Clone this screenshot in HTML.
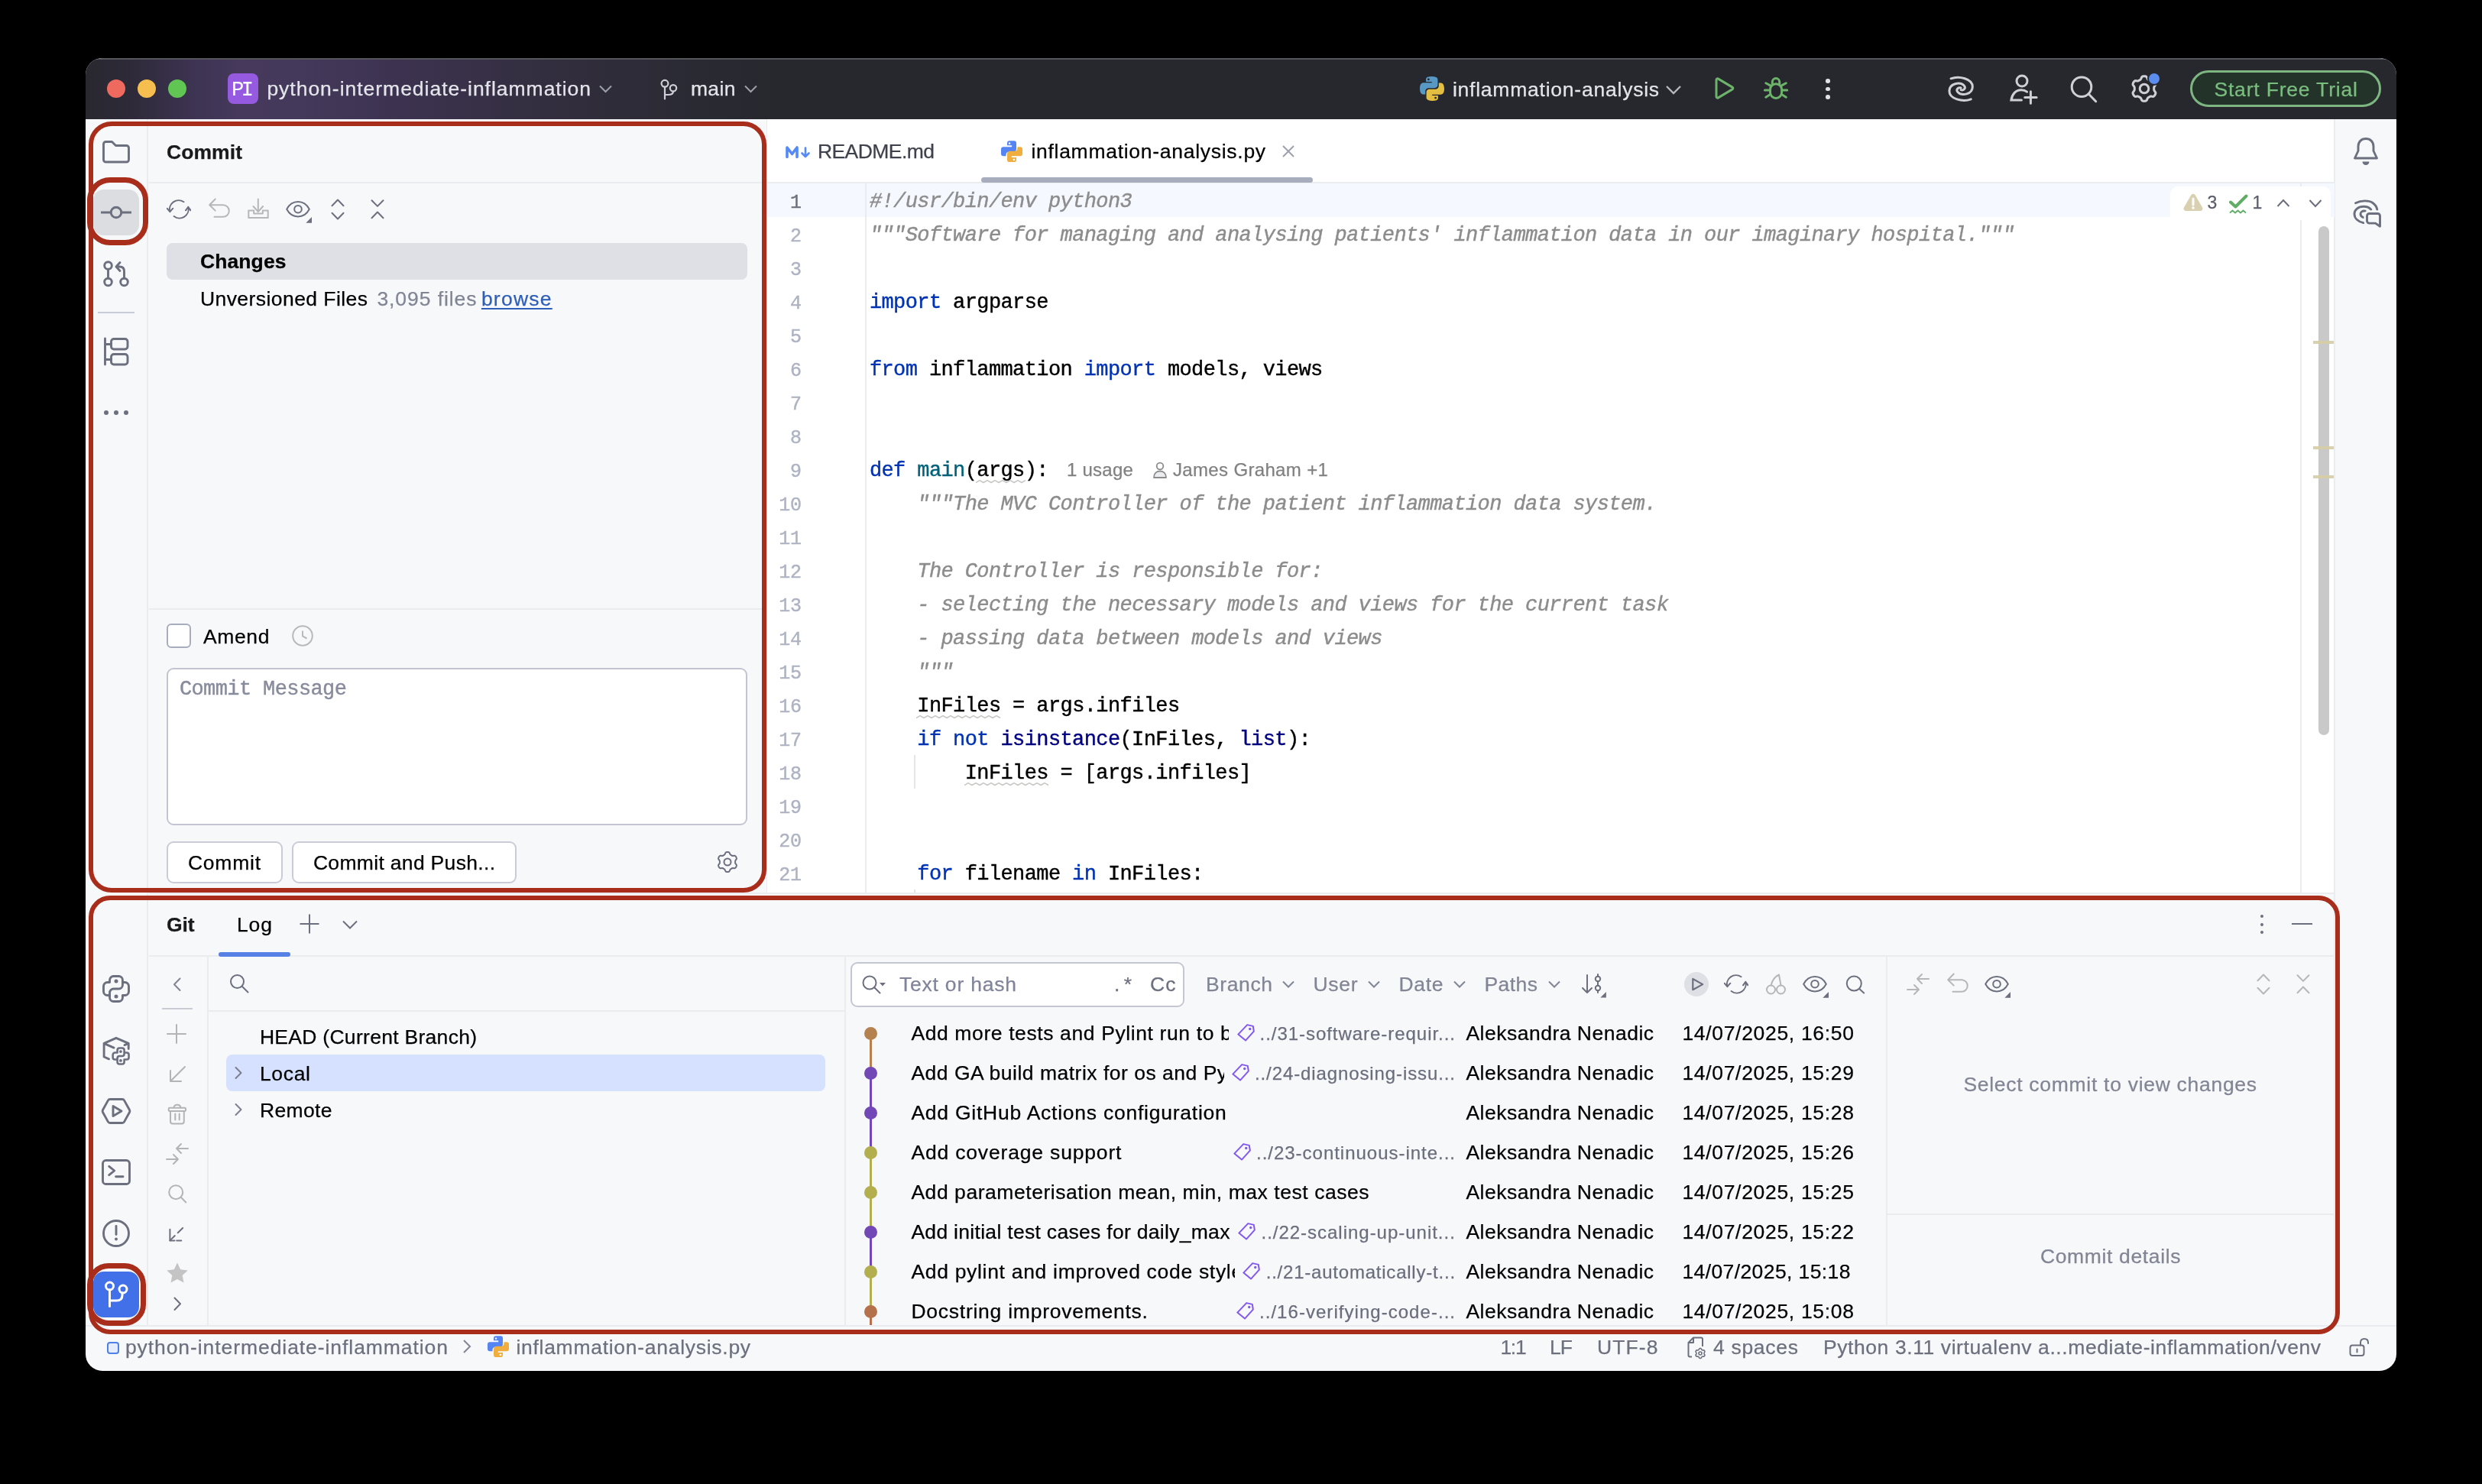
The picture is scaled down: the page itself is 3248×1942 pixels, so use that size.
<!DOCTYPE html>
<html><head><meta charset="utf-8"><title>PyCharm</title>
<style>
html,body{margin:0;padding:0;background:#000;}
body{width:3248px;height:1942px;position:relative;overflow:hidden;font-family:"Liberation Sans", sans-serif;}
#win{position:absolute;left:112px;top:76px;width:3024px;height:1718px;border-radius:22px;background:#F7F8FA;overflow:hidden;}
#root{position:absolute;left:-112px;top:-76px;width:3248px;height:1942px;will-change:transform;}
#root div,#root span,#root svg{position:absolute;display:block;box-sizing:border-box;}
#root span{white-space:pre;-webkit-text-stroke:0.250px;}
#root span.m{-webkit-text-stroke:0.400px;}
</style></head><body>
<div id="win"><div id="root">
<div style="left:112px;top:76px;width:3024px;height:80px;background:linear-gradient(90deg,#29282f 0px,#2e2a39 60px,#3d3352 140px,#46395c 200px,#45395b 270px,#3d3351 400px,#332e3f 600px,#2a2a33 800px,#27282e 900px);border-top:2px solid #55565c;"></div>
<div style="left:1004px;top:156px;width:2051px;height:1012px;background:#fff;"></div>
<div style="left:192px;top:156px;width:2px;height:1579px;background:#EBECF0;"></div>
<div style="left:3054px;top:156px;width:2px;height:1579px;background:#EBECF0;"></div>
<div style="left:1003px;top:156px;width:1px;height:1012px;background:#EBECF0;"></div>
<div style="left:140px;top:104px;width:24px;height:24px;border-radius:50%;background:#EE6A5F;"></div>
<div style="left:180px;top:104px;width:24px;height:24px;border-radius:50%;background:#F5BE4F;"></div>
<div style="left:220px;top:104px;width:24px;height:24px;border-radius:50%;background:#61C554;"></div>
<div style="left:298px;top:96px;width:40px;height:40px;border-radius:8px;background:#955AE0;"></div>
<span class="m" style="left:302.9px;top:105.3px;font-size:27px;line-height:27px;color:#fff;letter-spacing:-3.25px;font-family:'Liberation Mono', monospace;-webkit-text-stroke:0.100px #fff;">PI</span>
<span style="left:349.4px;top:103.1px;font-size:26.5px;line-height:26.5px;color:#E4E5EA;letter-spacing:0.98px;">python-intermediate-inflammation</span>
<svg style="left:781px;top:108px;" width="24" height="16" viewBox="0 0 24 16" fill="none"><path d="M4 4.5l7.500 7.500 7.500-7.500" stroke="#9DA0A8" stroke-width="2"/></svg>
<svg style="left:860px;top:98px;" width="32" height="36" viewBox="0 0 32 36" fill="none"><circle cx="10" cy="11.300" r="4.400" stroke="#CED0D6" stroke-width="2.200"/><circle cx="21" cy="17.300" r="4.200" stroke="#CED0D6" stroke-width="2.200"/><path d="M10 16v15.500M10 26h4.500c4.500 0 6.500-1.500 6.500-4.500" stroke="#CED0D6" stroke-width="2.200" stroke-linecap="round"/></svg>
<span style="left:903.9px;top:103.1px;font-size:26.5px;line-height:26.5px;color:#E4E5EA;letter-spacing:0.39px;">main</span>
<svg style="left:971px;top:108px;" width="24" height="16" viewBox="0 0 24 16" fill="none"><path d="M4 4.5l7.500 7.500 7.500-7.500" stroke="#9DA0A8" stroke-width="2"/></svg>
<svg style="left:1856px;top:98px;" width="36" height="36" viewBox="0 0 36 36" fill="none"><path d="M17.6 2c-8 0-7.5 3.5-7.5 3.5v3.6h7.7v1.1H7.1S2 9.6 2 17.7s4.5 7.8 4.5 7.8h2.7v-3.8s-.1-4.5 4.4-4.5h7.6s4.2.1 4.2-4.1V6.200S26.100 2 17.600 2z" fill="#5898C4"/><circle cx="13.4" cy="5.900" r="1.400" fill="#27282e"/><path d="M18.4 34c8 0 7.500-3.500 7.500-3.500v-3.600h-7.700v-1.100h10.700s5.100.600 5.100-7.500-4.500-7.800-4.500-7.800h-2.700v3.800s.1 4.500-4.400 4.500h-7.600s-4.200-.1-4.200 4.100v6.900S9.900 34 18.400 34z" fill="#E4BE40"/><circle cx="22.6" cy="30.100" r="1.400" fill="#27282e"/></svg>
<span style="left:1900.9px;top:103.6px;font-size:26.5px;line-height:26.5px;color:#E4E5EA;letter-spacing:0.77px;">inflammation-analysis</span>
<svg style="left:2178px;top:109px;" width="24" height="18" viewBox="0 0 24 18" fill="none"><path d="M3 4l9 9 9-9" stroke="#B4B8BF" stroke-width="2.4"/></svg>
<svg style="left:2240px;top:98px;" width="34" height="36" viewBox="0 0 34 36" fill="none"><path d="M6 6.500c0-1.300 1.400-2 2.500-1.400l18.500 11c1.100.7 1.100 2.200 0 2.800l-18.500 11c-1.100.7-2.500-.1-2.500-1.400z" stroke="#6DB36B" stroke-width="3" stroke-linejoin="round"/></svg>
<svg style="left:2306px;top:98px;" width="36" height="36" viewBox="0 0 36 36" fill="none"><g stroke="#6DB36B" stroke-width="3" stroke-linecap="round"><rect x="10.500" y="11.700" width="15.100" height="18.700" rx="7.500"/><path d="M13.300 12.300V9.300a4.700 4.700 0 0 1 9.400 0V12.300"/><path d="M10.200 13.600L4.800 10.700M25.900 13.600L31.300 10.700M9 20H3.400M27.100 20H32.700M10.200 25.800L4.800 29.200M25.900 25.800L31.300 29.200"/></g></svg>
<div style="left:2389.2px;top:103.2px;width:5.6px;height:5.6px;border-radius:50%;background:#DFE1E5;"></div>
<div style="left:2389.2px;top:113.7px;width:5.6px;height:5.6px;border-radius:50%;background:#DFE1E5;"></div>
<div style="left:2389.2px;top:124.2px;width:5.6px;height:5.6px;border-radius:50%;background:#DFE1E5;"></div>
<svg style="left:2546px;top:98px;" width="42" height="38" viewBox="0 0 42 38" fill="none"><g stroke="#CED0D6" stroke-width="3" stroke-linecap="round"><path d="M7.0 4.8C17.5 0.9 35.6 4.8 35.3 15.7 35.1 25.4 21.4 28.0 16.2 22.8 13.0 19.6 16.2 15.7 20.1 17.0"/><path d="M33.2 31.8C22.7 35.7 4.6 31.8 4.9 20.9 5.1 11.2 18.8 8.6 24.0 13.8 27.2 17.0 24.0 20.9 20.1 19.6"/></g></svg>
<svg style="left:2628px;top:96px;" width="40" height="42" viewBox="0 0 40 42" fill="none"><g stroke="#CED0D6" stroke-width="3" stroke-linecap="round"><circle cx="18" cy="10" r="7"/><path d="M17.400 35.100H3.900C5 27 10 21.700 17 21.700c3 0 5.500.8 7.500 2.500M29.400 23.800v15.400M21.700 31.500h15.400"/></g></svg>
<svg style="left:2708px;top:96px;" width="40" height="40" viewBox="0 0 40 40" fill="none"><g stroke="#CED0D6" stroke-width="3" stroke-linecap="round"><circle cx="16" cy="17.700" r="12.800"/><path d="M25.200 27L34.700 36.700"/></g></svg>
<svg style="left:2786px;top:96px;" width="40" height="40" viewBox="0 0 40 40" fill="none"><path d="M32.7 20.0L32.7 20.6L32.7 21.1L32.8 21.7L33.0 22.3L33.4 23.0L34.0 23.8L34.6 24.6L34.9 25.4L34.9 26.2L34.7 26.9L34.4 27.5L34.1 28.1L33.7 28.8L33.3 29.3L32.8 29.8L32.2 30.2L31.3 30.4L30.3 30.3L29.2 30.1L28.5 30.1L27.8 30.2L27.3 30.5L26.8 30.7L26.4 31.0L25.9 31.3L25.4 31.6L24.9 31.9L24.5 32.4L24.1 33.1L23.8 34.0L23.3 35.0L22.8 35.6L22.1 36.0L21.4 36.2L20.7 36.3L20.0 36.3L19.3 36.3L18.6 36.2L17.9 36.0L17.2 35.6L16.7 35.0L16.2 34.0L15.9 33.1L15.5 32.4L15.1 31.9L14.6 31.6L14.1 31.3L13.6 31.0L13.2 30.7L12.7 30.5L12.2 30.2L11.5 30.1L10.8 30.1L9.7 30.3L8.7 30.4L7.8 30.2L7.2 29.8L6.7 29.3L6.3 28.8L5.9 28.2L5.6 27.5L5.3 26.9L5.1 26.2L5.1 25.4L5.4 24.6L6.0 23.8L6.6 23.0L7.0 22.3L7.2 21.7L7.3 21.1L7.3 20.6L7.3 20.0L7.3 19.4L7.3 18.9L7.2 18.3L7.0 17.7L6.6 17.0L6.0 16.2L5.4 15.4L5.1 14.6L5.1 13.8L5.3 13.1L5.6 12.5L5.9 11.8L6.3 11.2L6.7 10.7L7.2 10.2L7.8 9.8L8.7 9.6L9.7 9.7L10.8 9.9L11.5 9.9L12.2 9.8L12.7 9.5L13.2 9.3L13.6 9.0L14.1 8.7L14.6 8.4L15.1 8.1L15.5 7.6L15.9 6.9L16.2 6.0L16.7 5.0L17.2 4.4L17.9 4.0L18.6 3.8L19.3 3.7L20.0 3.7L20.7 3.7L21.4 3.8L22.1 4.0L22.8 4.4L23.3 5.0L23.8 6.0L24.1 6.9L24.5 7.6L24.9 8.1L25.4 8.4L25.9 8.7L26.4 9.0L26.8 9.3L27.3 9.5L27.8 9.8L28.5 9.9L29.2 9.9L30.3 9.7L31.3 9.6L32.2 9.8L32.8 10.2L33.3 10.7L33.7 11.2L34.1 11.9L34.4 12.5L34.7 13.1L34.9 13.8L34.9 14.6L34.6 15.4L34.0 16.2L33.4 17.0L33.0 17.7L32.8 18.3L32.7 18.9L32.7 19.4Z" stroke="#CED0D6" stroke-width="3" stroke-linejoin="round"/><circle cx="20" cy="20" r="5.8" stroke="#CED0D6" stroke-width="3"/></svg>
<div style="left:2810px;top:94px;width:18px;height:18px;border-radius:50%;background:#5B8DEF;border:2px solid #27282e;"></div>
<div style="left:2866px;top:92px;width:250px;height:48px;border-radius:24px;border:3px solid #7DB681;background:#243329;"></div>
<span style="left:2897.4px;top:103.6px;font-size:26.5px;line-height:26.5px;color:#79BD7F;letter-spacing:0.82px;">Start Free Trial</span>
<svg style="left:132px;top:178px;" width="40" height="40" viewBox="0 0 40 40" fill="none"><path d="M3.500 10.500a3 3 0 0 1 3-3h8l5 5h14a3 3 0 0 1 3 3v15.500a3 3 0 0 1-3 3h-27a3 3 0 0 1-3-3z" stroke="#6C707E" stroke-width="2.900" stroke-linecap="round" stroke-linejoin="round"/></svg>
<div style="left:122px;top:248px;width:60px;height:60px;border-radius:14px;background:#DCDDE1;"></div>
<svg style="left:132px;top:258px;" width="40" height="40" viewBox="0 0 40 40" fill="none"><circle cx="20" cy="20" r="6.800" stroke="#6C707E" stroke-width="2.900" stroke-linecap="round" stroke-linejoin="round"/><path d="M1 20h12M27 20h12" stroke="#6C707E" stroke-width="2.900" stroke-linecap="round" stroke-linejoin="round"/></svg>
<svg style="left:132px;top:338px;" width="40" height="40" viewBox="0 0 40 40" fill="none"><circle cx="9.500" cy="9.500" r="4.800" stroke="#6C707E" stroke-width="2.900" stroke-linecap="round" stroke-linejoin="round"/><circle cx="9.500" cy="31" r="4.800" stroke="#6C707E" stroke-width="2.900" stroke-linecap="round" stroke-linejoin="round"/><circle cx="30.500" cy="31" r="4.800" stroke="#6C707E" stroke-width="2.900" stroke-linecap="round" stroke-linejoin="round"/><path d="M9.500 14.500v11.500M30.500 26v-9c0-4-2-6-6-6h-4M25 5.500l-5 5.500 5 5.500" stroke="#6C707E" stroke-width="2.900" stroke-linecap="round" stroke-linejoin="round"/></svg>
<div style="left:128px;top:408px;width:48px;height:2px;background:#C9CCD6;"></div>
<svg style="left:132px;top:440px;" width="40" height="40" viewBox="0 0 40 40" fill="none"><path d="M5.500 3v34M5.500 10.500h8M5.500 30.500h8" stroke="#6C707E" stroke-width="2.900" stroke-linecap="round" stroke-linejoin="round"/><rect x="13.500" y="3.500" width="21.500" height="13.500" rx="3.500" stroke="#6C707E" stroke-width="2.900" stroke-linecap="round" stroke-linejoin="round"/><rect x="13.500" y="23.500" width="21.500" height="13.500" rx="3.500" stroke="#6C707E" stroke-width="2.900" stroke-linecap="round" stroke-linejoin="round"/></svg>
<div style="left:136px;top:537px;width:6px;height:6px;border-radius:50%;background:#6C707E;"></div>
<div style="left:149px;top:537px;width:6px;height:6px;border-radius:50%;background:#6C707E;"></div>
<div style="left:162px;top:537px;width:6px;height:6px;border-radius:50%;background:#6C707E;"></div>
<span style="left:217.9px;top:185.6px;font-size:26.5px;line-height:26.5px;color:#1a1a1a;font-weight:700;letter-spacing:0.10px;">Commit</span>
<div style="left:195px;top:238px;width:808px;height:2px;background:#EBECF0;"></div>
<svg style="left:218px;top:258px;" width="32" height="32" viewBox="0 0 32 32" fill="none"><path d="M22.500 6.300A11.800 11.800 0 0 0 4.400 19.200M0.600 14.700L4.400 19.200 8.300 14.700M9.600 25A11.800 11.800 0 0 0 28.300 12.800M25 17.300L28.300 12.800 31.500 17.300" stroke="#6C707E" stroke-width="2" stroke-linecap="round" stroke-linejoin="round"/></svg>
<svg style="left:272px;top:258px;" width="32" height="32" viewBox="0 0 32 32" fill="none"><path d="M9.700 2.500L2.200 10.200 9.700 17.600M2.800 10.200H20a7.750 7.750 0 0 1 0 15.500H8.500" stroke="#B7B7BA" stroke-width="2" stroke-linecap="round" stroke-linejoin="round"/></svg>
<svg style="left:322px;top:258px;" width="32" height="32" viewBox="0 0 32 32" fill="none"><path d="M15.800 2.500V19M9.500 12l6.300 7.200 6.300-7.200M3.300 17.400h6.900v4.200h11.600v-4.200h6.900v9.600H3.300z" stroke="#B7B7BA" stroke-width="2" stroke-linecap="round" stroke-linejoin="round"/></svg>
<svg style="left:374px;top:258px;" width="36" height="36" viewBox="0 0 36 36" fill="none"><path d="M1.200 15.700c3.200-6 8.500-9.700 14.800-9.700s11.600 3.700 14.800 9.700c-3.200 6-8.500 9.700-14.800 9.700S4.400 21.700 1.200 15.700z" stroke="#6C707E" stroke-width="2" stroke-linecap="round" stroke-linejoin="round"/><circle cx="16" cy="15.700" r="4.800" stroke="#6C707E" stroke-width="2" stroke-linecap="round" stroke-linejoin="round"/><path d="M26.300 33.700h7.700v-7.700z" fill="#6C707E"/></svg>
<svg style="left:426px;top:258px;" width="32" height="32" viewBox="0 0 32 32" fill="none"><path d="M8.500 11.200L16 3.500 23.500 11.200M8.500 20.800L16 28.500 23.500 20.800" stroke="#6C707E" stroke-width="2" stroke-linecap="round" stroke-linejoin="round"/></svg>
<svg style="left:478px;top:258px;" width="32" height="32" viewBox="0 0 32 32" fill="none"><path d="M8.500 4.200L16 11.900 23.500 4.200M8.500 27.200L16 19.500 23.500 27.200" stroke="#6C707E" stroke-width="2" stroke-linecap="round" stroke-linejoin="round"/></svg>
<div style="left:218px;top:318px;width:760px;height:48px;border-radius:8px;background:#DFE0E5;"></div>
<span style="left:261.9px;top:329.1px;font-size:26.5px;line-height:26.5px;color:#000;font-weight:700;letter-spacing:0.12px;">Changes</span>
<span style="left:261.9px;top:377.6px;font-size:26.5px;line-height:26.5px;color:#000;letter-spacing:0.44px;">Unversioned Files</span>
<span style="left:493.4px;top:377.6px;font-size:26.5px;line-height:26.5px;color:#818594;letter-spacing:0.93px;">3,095 files</span>
<span style="left:629.9px;top:377.6px;font-size:26.5px;line-height:26.5px;color:#2F5EB8;letter-spacing:1.24px;text-decoration:underline;text-decoration-thickness:2px;text-underline-offset:3px;">browse</span>
<div style="left:195px;top:796px;width:808px;height:2px;background:#EBECF0;"></div>
<div style="left:218px;top:816px;width:32px;height:32px;border-radius:6px;border:2px solid #A8ADBD;background:#fff;"></div>
<span style="left:265.9px;top:819.6px;font-size:26.5px;line-height:26.5px;color:#000;letter-spacing:0.66px;">Amend</span>
<svg style="left:380px;top:816px;" width="32" height="32" viewBox="0 0 32 32" fill="none"><circle cx="16" cy="16" r="12.800" stroke="#B9B9BD" stroke-width="2"/><path d="M16 9.500v7l5.500 3" stroke="#B9B9BD" stroke-width="2"/></svg>
<div style="left:218px;top:874px;width:760px;height:206px;border-radius:9px;border:2px solid #C2C5D1;background:#fff;"></div>
<span class="m" style="left:234.9px;top:888.8px;font-size:27px;line-height:27px;color:#878B9C;letter-spacing:-0.60px;font-family:'Liberation Mono', monospace;">Commit Message</span>
<div style="left:218px;top:1101px;width:152px;height:55px;border-radius:9px;border:2px solid #C9CCD6;background:#fff;"></div>
<span style="left:245.9px;top:1116.1px;font-size:26.5px;line-height:26.5px;color:#000;letter-spacing:0.77px;">Commit</span>
<div style="left:382px;top:1101px;width:294px;height:55px;border-radius:9px;border:2px solid #C9CCD6;background:#fff;"></div>
<span style="left:409.9px;top:1116.1px;font-size:26.5px;line-height:26.5px;color:#000;letter-spacing:0.32px;">Commit and Push...</span>
<svg style="left:936px;top:1112px;" width="32" height="32" viewBox="0 0 32 32" fill="none"><path d="M26.1 16.0L26.1 16.4L26.1 16.9L26.2 17.3L26.3 17.8L26.7 18.4L27.2 19.0L27.7 19.7L27.9 20.3L27.9 20.9L27.7 21.5L27.5 22.0L27.3 22.5L27.0 23.0L26.6 23.4L26.2 23.8L25.7 24.1L25.0 24.3L24.2 24.2L23.4 24.0L22.7 24.0L22.3 24.2L21.8 24.3L21.5 24.6L21.1 24.8L20.7 25.0L20.3 25.2L19.9 25.5L19.6 25.9L19.3 26.4L19.0 27.2L18.6 27.9L18.2 28.5L17.7 28.8L17.1 28.9L16.6 29.0L16.0 29.0L15.4 29.0L14.9 28.9L14.3 28.8L13.8 28.5L13.4 27.9L13.0 27.2L12.7 26.4L12.4 25.9L12.1 25.5L11.7 25.2L11.3 25.0L10.9 24.8L10.5 24.6L10.2 24.3L9.7 24.2L9.3 24.0L8.6 24.0L7.8 24.2L7.0 24.3L6.3 24.1L5.8 23.8L5.4 23.4L5.0 23.0L4.7 22.5L4.5 22.0L4.3 21.5L4.1 20.9L4.1 20.3L4.3 19.7L4.8 19.0L5.3 18.4L5.7 17.8L5.8 17.3L5.9 16.9L5.9 16.4L5.9 16.0L5.9 15.6L5.9 15.1L5.8 14.7L5.7 14.2L5.3 13.6L4.8 13.0L4.3 12.3L4.1 11.7L4.1 11.1L4.3 10.5L4.5 10.0L4.7 9.5L5.0 9.0L5.4 8.6L5.8 8.2L6.3 7.9L7.0 7.7L7.8 7.8L8.6 8.0L9.3 8.0L9.7 7.8L10.2 7.7L10.5 7.4L10.9 7.2L11.3 7.0L11.7 6.8L12.1 6.5L12.4 6.1L12.7 5.6L13.0 4.8L13.4 4.1L13.8 3.5L14.3 3.2L14.9 3.1L15.4 3.0L16.0 3.0L16.6 3.0L17.1 3.1L17.7 3.2L18.2 3.5L18.6 4.1L19.0 4.8L19.3 5.6L19.6 6.1L19.9 6.5L20.3 6.8L20.7 7.0L21.1 7.2L21.5 7.4L21.8 7.7L22.3 7.8L22.7 8.0L23.4 8.0L24.2 7.8L25.0 7.7L25.7 7.9L26.2 8.2L26.6 8.6L27.0 9.0L27.3 9.5L27.5 10.0L27.7 10.5L27.9 11.1L27.9 11.7L27.7 12.3L27.2 13.0L26.7 13.6L26.3 14.2L26.2 14.7L26.1 15.1L26.1 15.6Z" stroke="#6C707E" stroke-width="2" stroke-linejoin="round"/><circle cx="16" cy="16" r="4.5" stroke="#6C707E" stroke-width="2"/></svg>
<div style="left:1004px;top:238px;width:2051px;height:2px;background:#EBECF0;"></div>
<svg style="left:1028px;top:190px;" width="34" height="18" viewBox="0 0 34 18" fill="none"><path d="M2 15.500V3l6.500 8.500L15 3v12.500" stroke="#548AF7" stroke-width="3.600" stroke-linejoin="round" stroke-linecap="round"/><path d="M26 3.500v11M21.500 10.500l4.500 4.500 4.500-4.500" stroke="#548AF7" stroke-width="2.600" stroke-linecap="round" stroke-linejoin="round"/></svg>
<span style="left:1069.9px;top:185.1px;font-size:26.5px;line-height:26.5px;color:#3F424D;letter-spacing:-0.56px;">README.md</span>
<svg style="left:1310px;top:184px;" width="28" height="28.4" viewBox="0 0 28 28" fill="none"><path d="M11 0H17a3 3 0 0 1 3 3V10.500a4 4 0 0 1-4 4H10.500a4 4 0 0 0-4 4V20H3a3 3 0 0 1-3-3V11a3 3 0 0 1 3-3H14.200V6.100H8V3a3 3 0 0 1 3-3z" fill="#5585F2"/><rect x="9.900" y="2.200" width="2.300" height="2.300" rx=".6" fill="#ffffff"/><g transform="rotate(180 14 14)"><path d="M11 0H17a3 3 0 0 1 3 3V10.500a4 4 0 0 1-4 4H10.500a4 4 0 0 0-4 4V20H3a3 3 0 0 1-3-3V11a3 3 0 0 1 3-3H14.200V6.100H8V3a3 3 0 0 1 3-3z" fill="#F0AE3E"/><rect x="9.900" y="2.200" width="2.300" height="2.300" rx=".6" fill="#ffffff"/></g></svg>
<span style="left:1349.4px;top:185.1px;font-size:26.5px;line-height:26.5px;color:#000;letter-spacing:0.72px;">inflammation-analysis.py</span>
<svg style="left:1676px;top:188px;" width="20" height="20" viewBox="0 0 20 20" fill="none"><path d="M3 3l14 14M17 3L3 17" stroke="#9DA0AE" stroke-width="2"/></svg>
<div style="left:1284px;top:232px;width:434px;height:7px;border-radius:3.500px;background:#A8ADBD;"></div>
<div style="left:1004px;top:240px;width:2051px;height:44px;background:#F5F8FE;"></div>
<div style="left:1132px;top:240px;width:2px;height:928px;background:#EBECF0;"></div>
<div style="left:3010px;top:240px;width:2px;height:928px;background:#EBECF0;"></div>
<div style="left:1196px;top:988px;width:2px;height:44px;background:#E4E5EA;"></div>
<div style="left:1196px;top:1164px;width:2px;height:4px;background:#E4E5EA;"></div>
<span class="m" style="left:1033.9px;top:252.6px;font-size:25px;line-height:25px;color:#6C707E;letter-spacing:-0.40px;font-family:'Liberation Mono', monospace;">1</span>
<span class="m" style="left:1033.9px;top:296.6px;font-size:25px;line-height:25px;color:#AEB3C2;letter-spacing:-0.40px;font-family:'Liberation Mono', monospace;">2</span>
<span class="m" style="left:1033.9px;top:340.6px;font-size:25px;line-height:25px;color:#AEB3C2;letter-spacing:-0.40px;font-family:'Liberation Mono', monospace;">3</span>
<span class="m" style="left:1033.9px;top:384.6px;font-size:25px;line-height:25px;color:#AEB3C2;letter-spacing:-0.40px;font-family:'Liberation Mono', monospace;">4</span>
<span class="m" style="left:1033.9px;top:428.6px;font-size:25px;line-height:25px;color:#AEB3C2;letter-spacing:-0.40px;font-family:'Liberation Mono', monospace;">5</span>
<span class="m" style="left:1033.9px;top:472.6px;font-size:25px;line-height:25px;color:#AEB3C2;letter-spacing:-0.40px;font-family:'Liberation Mono', monospace;">6</span>
<span class="m" style="left:1033.9px;top:516.6px;font-size:25px;line-height:25px;color:#AEB3C2;letter-spacing:-0.40px;font-family:'Liberation Mono', monospace;">7</span>
<span class="m" style="left:1033.9px;top:560.6px;font-size:25px;line-height:25px;color:#AEB3C2;letter-spacing:-0.40px;font-family:'Liberation Mono', monospace;">8</span>
<span class="m" style="left:1033.9px;top:604.6px;font-size:25px;line-height:25px;color:#AEB3C2;letter-spacing:-0.40px;font-family:'Liberation Mono', monospace;">9</span>
<span class="m" style="left:1019.3px;top:648.6px;font-size:25px;line-height:25px;color:#AEB3C2;letter-spacing:-0.40px;font-family:'Liberation Mono', monospace;">10</span>
<span class="m" style="left:1019.3px;top:692.6px;font-size:25px;line-height:25px;color:#AEB3C2;letter-spacing:-0.40px;font-family:'Liberation Mono', monospace;">11</span>
<span class="m" style="left:1019.3px;top:736.6px;font-size:25px;line-height:25px;color:#AEB3C2;letter-spacing:-0.40px;font-family:'Liberation Mono', monospace;">12</span>
<span class="m" style="left:1019.3px;top:780.6px;font-size:25px;line-height:25px;color:#AEB3C2;letter-spacing:-0.40px;font-family:'Liberation Mono', monospace;">13</span>
<span class="m" style="left:1019.3px;top:824.6px;font-size:25px;line-height:25px;color:#AEB3C2;letter-spacing:-0.40px;font-family:'Liberation Mono', monospace;">14</span>
<span class="m" style="left:1019.3px;top:868.6px;font-size:25px;line-height:25px;color:#AEB3C2;letter-spacing:-0.40px;font-family:'Liberation Mono', monospace;">15</span>
<span class="m" style="left:1019.3px;top:912.6px;font-size:25px;line-height:25px;color:#AEB3C2;letter-spacing:-0.40px;font-family:'Liberation Mono', monospace;">16</span>
<span class="m" style="left:1019.3px;top:956.6px;font-size:25px;line-height:25px;color:#AEB3C2;letter-spacing:-0.40px;font-family:'Liberation Mono', monospace;">17</span>
<span class="m" style="left:1019.3px;top:1000.6px;font-size:25px;line-height:25px;color:#AEB3C2;letter-spacing:-0.40px;font-family:'Liberation Mono', monospace;">18</span>
<span class="m" style="left:1019.3px;top:1044.6px;font-size:25px;line-height:25px;color:#AEB3C2;letter-spacing:-0.40px;font-family:'Liberation Mono', monospace;">19</span>
<span class="m" style="left:1019.3px;top:1088.6px;font-size:25px;line-height:25px;color:#AEB3C2;letter-spacing:-0.40px;font-family:'Liberation Mono', monospace;">20</span>
<span class="m" style="left:1019.3px;top:1132.6px;font-size:25px;line-height:25px;color:#AEB3C2;letter-spacing:-0.40px;font-family:'Liberation Mono', monospace;">21</span>
<span class="m" style="left:1137.9px;top:251.1px;font-size:27px;line-height:27px;color:#8C8C8C;font-style:italic;letter-spacing:-0.60px;font-family:'Liberation Mono', monospace;">#!/usr/bin/env python3</span>
<span class="m" style="left:1137.9px;top:295.1px;font-size:27px;line-height:27px;color:#8C8C8C;font-style:italic;letter-spacing:-0.60px;font-family:'Liberation Mono', monospace;">&quot;&quot;&quot;Software for managing and analysing patients&#x27; inflammation data in our imaginary hospital.&quot;&quot;&quot;</span>
<span class="m" style="left:1137.9px;top:383.1px;font-size:27px;line-height:27px;color:#0033B3;letter-spacing:-0.60px;font-family:'Liberation Mono', monospace;">import</span>
<span class="m" style="left:1247.1px;top:383.1px;font-size:27px;line-height:27px;color:#000;letter-spacing:-0.60px;font-family:'Liberation Mono', monospace;">argparse</span>
<span class="m" style="left:1137.9px;top:471.1px;font-size:27px;line-height:27px;color:#0033B3;letter-spacing:-0.60px;font-family:'Liberation Mono', monospace;">from</span>
<span class="m" style="left:1215.9px;top:471.1px;font-size:27px;line-height:27px;color:#000;letter-spacing:-0.60px;font-family:'Liberation Mono', monospace;">inflammation</span>
<span class="m" style="left:1418.7px;top:471.1px;font-size:27px;line-height:27px;color:#0033B3;letter-spacing:-0.60px;font-family:'Liberation Mono', monospace;">import</span>
<span class="m" style="left:1527.9px;top:471.1px;font-size:27px;line-height:27px;color:#000;letter-spacing:-0.60px;font-family:'Liberation Mono', monospace;">models, views</span>
<span class="m" style="left:1137.9px;top:603.1px;font-size:27px;line-height:27px;color:#0033B3;letter-spacing:-0.60px;font-family:'Liberation Mono', monospace;">def</span>
<span class="m" style="left:1200.3px;top:603.1px;font-size:27px;line-height:27px;color:#00627A;letter-spacing:-0.60px;font-family:'Liberation Mono', monospace;">main</span>
<span class="m" style="left:1262.7px;top:603.1px;font-size:27px;line-height:27px;color:#000;letter-spacing:-0.60px;font-family:'Liberation Mono', monospace;">(args):</span>
<span class="m" style="left:1200.3px;top:647.1px;font-size:27px;line-height:27px;color:#8C8C8C;font-style:italic;letter-spacing:-0.60px;font-family:'Liberation Mono', monospace;">&quot;&quot;&quot;The MVC Controller of the patient inflammation data system.</span>
<span class="m" style="left:1200.3px;top:735.1px;font-size:27px;line-height:27px;color:#8C8C8C;font-style:italic;letter-spacing:-0.60px;font-family:'Liberation Mono', monospace;">The Controller is responsible for:</span>
<span class="m" style="left:1200.3px;top:779.1px;font-size:27px;line-height:27px;color:#8C8C8C;font-style:italic;letter-spacing:-0.60px;font-family:'Liberation Mono', monospace;">- selecting the necessary models and views for the current task</span>
<span class="m" style="left:1200.3px;top:823.1px;font-size:27px;line-height:27px;color:#8C8C8C;font-style:italic;letter-spacing:-0.60px;font-family:'Liberation Mono', monospace;">- passing data between models and views</span>
<span class="m" style="left:1200.3px;top:867.1px;font-size:27px;line-height:27px;color:#8C8C8C;font-style:italic;letter-spacing:-0.60px;font-family:'Liberation Mono', monospace;">&quot;&quot;&quot;</span>
<span class="m" style="left:1200.3px;top:911.1px;font-size:27px;line-height:27px;color:#000;letter-spacing:-0.60px;font-family:'Liberation Mono', monospace;">InFiles = args.infiles</span>
<span class="m" style="left:1200.3px;top:955.1px;font-size:27px;line-height:27px;color:#0033B3;letter-spacing:-0.60px;font-family:'Liberation Mono', monospace;">if</span>
<span class="m" style="left:1247.1px;top:955.1px;font-size:27px;line-height:27px;color:#0033B3;letter-spacing:-0.60px;font-family:'Liberation Mono', monospace;">not</span>
<span class="m" style="left:1309.5px;top:955.1px;font-size:27px;line-height:27px;color:#000080;letter-spacing:-0.60px;font-family:'Liberation Mono', monospace;">isinstance</span>
<span class="m" style="left:1465.5px;top:955.1px;font-size:27px;line-height:27px;color:#000;letter-spacing:-0.60px;font-family:'Liberation Mono', monospace;">(InFiles, </span>
<span class="m" style="left:1621.5px;top:955.1px;font-size:27px;line-height:27px;color:#000080;letter-spacing:-0.60px;font-family:'Liberation Mono', monospace;">list</span>
<span class="m" style="left:1683.9px;top:955.1px;font-size:27px;line-height:27px;color:#000;letter-spacing:-0.60px;font-family:'Liberation Mono', monospace;">):</span>
<span class="m" style="left:1262.7px;top:999.1px;font-size:27px;line-height:27px;color:#000;letter-spacing:-0.60px;font-family:'Liberation Mono', monospace;">InFiles = [args.infiles]</span>
<span class="m" style="left:1200.3px;top:1131.1px;font-size:27px;line-height:27px;color:#0033B3;letter-spacing:-0.60px;font-family:'Liberation Mono', monospace;">for</span>
<span class="m" style="left:1262.7px;top:1131.1px;font-size:27px;line-height:27px;color:#000;letter-spacing:-0.60px;font-family:'Liberation Mono', monospace;">filename</span>
<span class="m" style="left:1403.1px;top:1131.1px;font-size:27px;line-height:27px;color:#0033B3;letter-spacing:-0.60px;font-family:'Liberation Mono', monospace;">in</span>
<span class="m" style="left:1449.9px;top:1131.1px;font-size:27px;line-height:27px;color:#000;letter-spacing:-0.60px;font-family:'Liberation Mono', monospace;">InFiles:</span>
<svg style="left:1277.4px;top:627px;" width="68" height="7" viewBox="0 0 68 7" fill="none"><path d="M0 4.500l5 -2.8l5 2.8l5 -2.8l5 2.8l5 -2.8l5 2.8l5 -2.8l5 2.8l5 -2.8l5 2.8l5 -2.8l5 2.8l5 -2.8" stroke="#C6C6C4" stroke-width="1.500" stroke-linejoin="round"/></svg>
<svg style="left:1199.4px;top:935px;" width="114" height="7" viewBox="0 0 114 7" fill="none"><path d="M0 4.500l5 -2.8l5 2.8l5 -2.8l5 2.8l5 -2.8l5 2.8l5 -2.8l5 2.8l5 -2.8l5 2.8l5 -2.8l5 2.8l5 -2.8l5 2.8l5 -2.8l5 2.8l5 -2.8l5 2.8l5 -2.8l5 2.8l5 -2.8l5 2.8" stroke="#C6C6C4" stroke-width="1.500" stroke-linejoin="round"/></svg>
<svg style="left:1261.8px;top:1023px;" width="114" height="7" viewBox="0 0 114 7" fill="none"><path d="M0 4.500l5 -2.8l5 2.8l5 -2.8l5 2.8l5 -2.8l5 2.8l5 -2.8l5 2.8l5 -2.8l5 2.8l5 -2.8l5 2.8l5 -2.8l5 2.8l5 -2.8l5 2.8l5 -2.8l5 2.8l5 -2.8l5 2.8l5 -2.8l5 2.8" stroke="#C6C6C4" stroke-width="1.500" stroke-linejoin="round"/></svg>
<span style="left:1396.0px;top:603.2px;font-size:24px;line-height:24px;color:#808080;letter-spacing:0.25px;">1 usage</span>
<svg style="left:1508px;top:603px;" width="20" height="24" viewBox="0 0 20 24" fill="none"><circle cx="10" cy="7" r="4.300" stroke="#8C8C8C" stroke-width="1.800"/><path d="M2 22c0-5 3-8.500 8-8.500s8 3.500 8 8.500z" stroke="#8C8C8C" stroke-width="1.800" stroke-linejoin="round" fill="#EBECF0"/></svg>
<span style="left:1535.0px;top:603.2px;font-size:24px;line-height:24px;color:#808080;letter-spacing:0.34px;">James Graham +1</span>
<div style="left:2840px;top:244px;width:210px;height:44px;border-radius:10px 10px 0 0;background:#fff;"></div>
<svg style="left:2856px;top:252px;" width="28" height="26" viewBox="0 0 28 26" fill="none"><path d="M11.300 3.200c1.200-2.100 4.200-2.100 5.400 0l9.300 16.200c1.200 2.100-.3 4.600-2.700 4.600H4.700c-2.400 0-3.900-2.500-2.700-4.600z" fill="#D8D0B0"/><path d="M14 8v8" stroke="#fff" stroke-width="3" stroke-linecap="round"/><circle cx="14" cy="20" r="1.800" fill="#fff"/></svg>
<span style="left:2888.6px;top:254.0px;font-size:23px;line-height:23px;color:#5A5D6B;">3</span>
<svg style="left:2916px;top:253px;" width="28" height="28" viewBox="0 0 28 28" fill="none"><path d="M3 11.500l6.500 6L23.500 3.500" stroke="#5FAD65" stroke-width="4" stroke-linecap="round" stroke-linejoin="round"/><path d="M2 25.500l3.500-3 3.500 3 3.500-3 3.500 3 3.500-3 3.500 3" stroke="#5FAD65" stroke-width="1.800"/></svg>
<span style="left:2947.6px;top:254.0px;font-size:23px;line-height:23px;color:#5A5D6B;">1</span>
<svg style="left:2978px;top:258px;" width="20" height="16" viewBox="0 0 20 16" fill="none"><path d="M2.500 12l7.500-8 7.500 8" stroke="#6C707E" stroke-width="2"/></svg>
<svg style="left:3020px;top:258px;" width="20" height="16" viewBox="0 0 20 16" fill="none"><path d="M2.500 4l7.500 8 7.500-8" stroke="#6C707E" stroke-width="2"/></svg>
<div style="left:3034px;top:296px;width:14px;height:666px;border-radius:7px;background:#C9C9C9;"></div>
<div style="left:3027px;top:446px;width:27px;height:4px;background:#D6CCA4;opacity:.9;"></div>
<div style="left:3027px;top:584px;width:27px;height:4px;background:#D6CCA4;opacity:.9;"></div>
<div style="left:3027px;top:622px;width:27px;height:4px;background:#D6CCA4;opacity:.9;"></div>
<svg style="left:3076px;top:178px;" width="40" height="40" viewBox="0 0 40 40" fill="none"><path d="M20 3.500c-6 0-10 4.300-10 10v6l-4.500 9.500h29L30 19.500v-6c0-5.700-4-10-10-10z" stroke="#6C707E" stroke-width="2.900" stroke-linecap="round" stroke-linejoin="round"/><path d="M15.500 33.500a4.500 4.500 0 0 0 9 0z" fill="#6C707E"/></svg>
<svg style="left:3076px;top:258px;" width="44" height="44" viewBox="0 0 44 44" fill="none"><path d="M6.500 7.700C14 4 24 4 29 7.500 32.500 10 34.300 13 34.800 16.200M26.800 16.200C24.500 13.500 21 12.300 17 12.300 10 12.300 5 16.500 5 22 5 27.500 9.500 32 16.900 33.700M19.200 18.100C15.500 17.500 13 19.500 13 22 13 24 14.500 25.800 16.900 26.600" stroke="#6C707E" stroke-width="2.900" stroke-linecap="round" stroke-linejoin="round"/><path d="M24.500 21.500H35.500a3 3 0 0 1 3 3V38.300L32.500 34.100H24.500a3 3 0 0 1-3-3V24.500a3 3 0 0 1 3-3z" stroke="#F7F8FA" stroke-width="8" fill="#F7F8FA"/><path d="M24.500 21.500H35.500a3 3 0 0 1 3 3V38.300L32.500 34.100H24.500a3 3 0 0 1-3-3V24.500a3 3 0 0 1 3-3z" stroke="#6C707E" stroke-width="2.900" stroke-linecap="round" stroke-linejoin="round"/></svg>
<div style="left:195px;top:1168px;width:2859px;height:2px;background:#EBECF0;"></div>
<span style="left:217.9px;top:1197.1px;font-size:26.5px;line-height:26.5px;color:#1a1a1a;font-weight:700;letter-spacing:-0.10px;">Git</span>
<span style="left:309.9px;top:1197.1px;font-size:26.5px;line-height:26.5px;color:#000;letter-spacing:0.95px;">Log</span>
<svg style="left:390px;top:1194px;" width="30" height="30" viewBox="0 0 30 30" fill="none"><path d="M15 2.500v25M2.500 15h25" stroke="#6C707E" stroke-width="2"/></svg>
<svg style="left:446px;top:1201px;" width="24" height="18" viewBox="0 0 24 18" fill="none"><path d="M3 4.500l9 9 9-9" stroke="#6C707E" stroke-width="2"/></svg>
<div style="left:195px;top:1250px;width:2859px;height:2px;background:#EBECF0;"></div>
<div style="left:286px;top:1246px;width:94px;height:6px;border-radius:3px;background:#5881E6;"></div>
<div style="left:2957.5px;top:1197px;width:4px;height:4px;border-radius:50%;background:#6C707E;"></div>
<div style="left:2957.5px;top:1207.5px;width:4px;height:4px;border-radius:50%;background:#6C707E;"></div>
<div style="left:2957.5px;top:1218px;width:4px;height:4px;border-radius:50%;background:#6C707E;"></div>
<div style="left:2999px;top:1208px;width:27px;height:2px;background:#6C707E;"></div>
<div style="left:270.5px;top:1252px;width:2px;height:483px;background:#EBECF0;"></div>
<div style="left:1105px;top:1252px;width:2px;height:483px;background:#EBECF0;"></div>
<div style="left:2468px;top:1252px;width:2px;height:483px;background:#EBECF0;"></div>
<svg style="left:132px;top:1274px;" width="40" height="40" viewBox="0 0 40 40" fill="none"><path d="M11.55 28.45 L8.50 28.45 A5 5 0 0 1 3.50 23.45 L3.50 16.55 A5 5 0 0 1 8.50 11.55 L11.55 11.55 L11.55 8.50 A5 5 0 0 1 16.55 3.50 L23.45 3.50 A5 5 0 0 1 28.45 8.50 L28.45 15.00 A5 5 0 0 1 23.45 20.00 L16.55 20.00 A5 5 0 0 0 11.55 25.00 Z M28.45 11.55 L31.50 11.55 A5 5 0 0 1 36.50 16.55 L36.50 23.45 A5 5 0 0 1 31.50 28.45 L28.45 28.45 L28.45 31.50 A5 5 0 0 1 23.45 36.50 L16.55 36.50 A5 5 0 0 1 11.55 31.50 L11.55 25.00 A5 5 0 0 1 16.55 20.00 L23.45 20.00 A5 5 0 0 0 28.45 15.00 Z" stroke="#6C707E" stroke-width="2.900" stroke-linecap="round" stroke-linejoin="round"/><circle cx="20" cy="10" r="2.500" fill="#6C707E"/><circle cx="20" cy="30" r="2.500" fill="#6C707E"/></svg>
<svg style="left:132px;top:1354px;" width="40" height="42" viewBox="0 0 40 42" fill="none"><path d="M36.200 18.600V11.300L20 4.300 4.100 11.300V29L10.500 31.800M5 11.900L17 17.100M36 11.500L31 13.600" stroke="#6C707E" stroke-width="2.900" stroke-linecap="round" stroke-linejoin="round"/><path d="M21.60 32.50 L18.45 32.50 A2.8 2.8 0 0 1 15.65 29.70 L15.65 26.30 A2.8 2.8 0 0 1 18.45 23.50 L21.60 23.50 L21.60 20.35 A2.8 2.8 0 0 1 24.40 17.55 L27.80 17.55 A2.8 2.8 0 0 1 30.60 20.35 L30.60 25.20 A2.8 2.8 0 0 1 27.80 28.00 L24.40 28.00 A2.8 2.8 0 0 0 21.60 30.80 Z M30.60 23.50 L33.75 23.50 A2.8 2.8 0 0 1 36.55 26.30 L36.55 29.70 A2.8 2.8 0 0 1 33.75 32.50 L30.60 32.50 L30.60 35.65 A2.8 2.8 0 0 1 27.80 38.45 L24.40 38.45 A2.8 2.8 0 0 1 21.60 35.65 L21.60 30.80 A2.8 2.8 0 0 1 24.40 28.00 L27.80 28.00 A2.8 2.8 0 0 0 30.60 25.20 Z" stroke="#6C707E" stroke-width="2.600" stroke-linecap="round" stroke-linejoin="round"/><circle cx="25.900" cy="22.100" r="1.900" fill="#6C707E"/><circle cx="25.900" cy="33.900" r="1.900" fill="#6C707E"/></svg>
<svg style="left:132px;top:1434px;" width="40" height="40" viewBox="0 0 40 40" fill="none"><path d="M12 4.500h16c1 0 2 .5 2.500 1.400l7 12.600c.5.900.5 2 0 3l-7 12.600c-.5.900-1.500 1.400-2.500 1.400H12c-1 0-2-.5-2.500-1.400l-7-12.600c-.5-.900-.5-2 0-3l7-12.600c.5-.900 1.500-1.400 2.500-1.400z" stroke="#6C707E" stroke-width="2.900" stroke-linecap="round" stroke-linejoin="round"/><path d="M16 13.500l11 6.500-11 6.500z" stroke="#6C707E" stroke-width="2.900" stroke-linecap="round" stroke-linejoin="round"/></svg>
<svg style="left:132px;top:1514px;" width="40" height="40" viewBox="0 0 40 40" fill="none"><rect x="2.500" y="4.500" width="35" height="31" rx="4" stroke="#6C707E" stroke-width="2.900" stroke-linecap="round" stroke-linejoin="round"/><path d="M10.700 12.300l7 5.700-7 5.700M19.600 25.800h9.400" stroke="#6C707E" stroke-width="2.900" stroke-linecap="round" stroke-linejoin="round"/></svg>
<svg style="left:132px;top:1594px;" width="40" height="40" viewBox="0 0 40 40" fill="none"><circle cx="20" cy="20" r="16.500" stroke="#6C707E" stroke-width="2.900" stroke-linecap="round" stroke-linejoin="round"/><path d="M20 10.500v11" stroke="#6C707E" stroke-width="2.900" stroke-linecap="round" stroke-linejoin="round" stroke-width="3"/><circle cx="20" cy="27.500" r="2" fill="#6C707E"/></svg>
<div style="left:122px;top:1664px;width:60px;height:60px;border-radius:14px;background:#4170E8;"></div>
<svg style="left:132px;top:1674px;" width="40" height="40" viewBox="0 0 40 40" fill="none"><circle cx="11.500" cy="9" r="5" stroke="#fff" stroke-width="3" stroke-linecap="round" stroke-linejoin="round"/><circle cx="29" cy="13" r="5" stroke="#fff" stroke-width="3" stroke-linecap="round" stroke-linejoin="round"/><path d="M11.500 14v21.500M11.500 28h9c5 0 7.500-2.500 7.500-7v-3" stroke="#fff" stroke-width="3" stroke-linecap="round" stroke-linejoin="round"/></svg>
<svg style="left:220px;top:1274px;" width="24" height="28" viewBox="0 0 24 28" fill="none"><path d="M15.500 6.500L8 14.300 15.500 22" stroke="#818594" stroke-width="2" stroke-linecap="round" stroke-linejoin="round"/></svg>
<div style="left:212px;top:1319px;width:40px;height:2px;background:#C9CCD6;"></div>
<svg style="left:215px;top:1337px;" width="32" height="32" viewBox="0 0 32 32" fill="none"><path d="M16 4v24M4 16h24" stroke="#B4B4B7" stroke-width="2" stroke-linecap="round" stroke-linejoin="round"/></svg>
<svg style="left:216px;top:1390px;" width="32" height="32" viewBox="0 0 32 32" fill="none"><path d="M26 6L7 25M7 11v14h14" stroke="#B4B4B7" stroke-width="2" stroke-linecap="round" stroke-linejoin="round"/></svg>
<svg style="left:216px;top:1442px;" width="32" height="32" viewBox="0 0 32 32" fill="none"><rect x="4.700" y="7.700" width="22.300" height="4.300" rx="1.200" stroke="#B4B4B7" stroke-width="2" stroke-linecap="round" stroke-linejoin="round"/><path d="M11.500 7.500c0-2.500 2-3.700 4.400-3.700s4.400 1.200 4.400 3.700M7 12.200V25.500c0 1.700 1.200 2.900 2.900 2.900h12c1.700 0 2.900-1.200 2.900-2.900V12.200M13.300 15.500v8M18.700 15.500v8" stroke="#B4B4B7" stroke-width="2" stroke-linecap="round" stroke-linejoin="round"/></svg>
<svg style="left:216px;top:1494px;" width="32" height="32" viewBox="0 0 32 32" fill="none"><path d="M30 9H15M21 3l-6 6 6 6M2 23h15M11 17l6 6-6 6" stroke="#B4B4B7" stroke-width="2" stroke-linecap="round" stroke-linejoin="round"/></svg>
<svg style="left:216px;top:1546px;" width="32" height="32" viewBox="0 0 32 32" fill="none"><circle cx="14.200" cy="14.200" r="9" stroke="#B4B4B7" stroke-width="2" stroke-linecap="round" stroke-linejoin="round"/><path d="M20.800 20.800l6.500 6.700" stroke="#B4B4B7" stroke-width="2" stroke-linecap="round" stroke-linejoin="round"/></svg>
<svg style="left:216px;top:1598px;" width="32" height="32" viewBox="0 0 32 32" fill="none"><path d="M6.400 10.800v14.600h6.100M15.200 25.400h6.100" stroke="#6C707E" stroke-width="2" stroke-linecap="round" stroke-linejoin="round"/><path d="M6.400 25.400L25.700 6.400" stroke="#6C707E" stroke-width="2" stroke-linecap="round" stroke-linejoin="round" stroke-dasharray="9 5.500"/></svg>
<svg style="left:216px;top:1650px;" width="32" height="32" viewBox="0 0 32 32" fill="none"><path d="M16 2.500l4.200 8.800 9.500 1.200-7 6.600 1.800 9.500-8.500-4.700-8.500 4.700 1.800-9.500-7-6.600 9.500-1.200z" fill="#C4C4C4"/></svg>
<svg style="left:220px;top:1692px;" width="24" height="28" viewBox="0 0 24 28" fill="none"><path d="M8.500 6.500L16 14.300 8.500 22" stroke="#6C707E" stroke-width="2" stroke-linecap="round" stroke-linejoin="round"/></svg>
<svg style="left:298px;top:1272px;" width="30" height="30" viewBox="0 0 30 30" fill="none"><circle cx="12.500" cy="12.500" r="8.500" stroke="#6C707E" stroke-width="2" stroke-linecap="round" stroke-linejoin="round"/><path d="M19 19l7.500 7.500" stroke="#6C707E" stroke-width="2" stroke-linecap="round" stroke-linejoin="round"/></svg>
<div style="left:273px;top:1322px;width:832px;height:2px;background:#EBECF0;"></div>
<span style="left:339.9px;top:1344.1px;font-size:26.5px;line-height:26.5px;color:#000;letter-spacing:0.29px;">HEAD (Current Branch)</span>
<div style="left:296px;top:1380px;width:784px;height:48px;border-radius:8px;background:#D5E1FF;"></div>
<svg style="left:302px;top:1392px;" width="20" height="24" viewBox="0 0 20 24" fill="none"><path d="M6.500 5l7 7-7 7" stroke="#7A7E8D" stroke-width="2" stroke-linecap="round" stroke-linejoin="round"/></svg>
<span style="left:339.9px;top:1392.1px;font-size:26.5px;line-height:26.5px;color:#000;letter-spacing:0.69px;">Local</span>
<svg style="left:302px;top:1440px;" width="20" height="24" viewBox="0 0 20 24" fill="none"><path d="M6.500 5l7 7-7 7" stroke="#7A7E8D" stroke-width="2" stroke-linecap="round" stroke-linejoin="round"/></svg>
<span style="left:339.9px;top:1440.1px;font-size:26.5px;line-height:26.5px;color:#000;letter-spacing:0.36px;">Remote</span>
<div style="left:1112.5px;top:1258.5px;width:437px;height:59px;border-radius:9px;border:2px solid #C4C7D2;background:#fff;"></div>
<svg style="left:1126px;top:1274px;" width="36" height="30" viewBox="0 0 36 30" fill="none"><circle cx="12" cy="12" r="8.500" stroke="#6C707E" stroke-width="2" stroke-linecap="round" stroke-linejoin="round"/><path d="M18.500 18.500l7 7" stroke="#6C707E" stroke-width="2" stroke-linecap="round" stroke-linejoin="round"/><path d="M25 12h8l-4 4.500z" fill="#6C707E"/></svg>
<span style="left:1176.9px;top:1275.1px;font-size:26.5px;line-height:26.5px;color:#80849A;letter-spacing:0.80px;">Text or hash</span>
<span style="left:1457.9px;top:1275.1px;font-size:26.5px;line-height:26.5px;color:#6C707E;letter-spacing:5.43px;">.*</span>
<span style="left:1504.9px;top:1275.1px;font-size:26.5px;line-height:26.5px;color:#6C707E;letter-spacing:1.23px;">Cc</span>
<span style="left:1577.9px;top:1275.1px;font-size:26.5px;line-height:26.5px;color:#818594;letter-spacing:0.63px;">Branch</span>
<svg style="left:1676px;top:1280px;" width="20" height="16" viewBox="0 0 20 16" fill="none"><path d="M3 4.500l7 7 7-7" stroke="#818594" stroke-width="2"/></svg>
<span style="left:1718.4px;top:1275.1px;font-size:26.5px;line-height:26.5px;color:#818594;letter-spacing:0.72px;">User</span>
<svg style="left:1788px;top:1280px;" width="20" height="16" viewBox="0 0 20 16" fill="none"><path d="M3 4.500l7 7 7-7" stroke="#818594" stroke-width="2"/></svg>
<span style="left:1830.4px;top:1275.1px;font-size:26.5px;line-height:26.5px;color:#818594;letter-spacing:0.71px;">Date</span>
<svg style="left:1900px;top:1280px;" width="20" height="16" viewBox="0 0 20 16" fill="none"><path d="M3 4.500l7 7 7-7" stroke="#818594" stroke-width="2"/></svg>
<span style="left:1942.4px;top:1275.1px;font-size:26.5px;line-height:26.5px;color:#818594;letter-spacing:0.46px;">Paths</span>
<svg style="left:2024px;top:1280px;" width="20" height="16" viewBox="0 0 20 16" fill="none"><path d="M3 4.500l7 7 7-7" stroke="#818594" stroke-width="2"/></svg>
<svg style="left:2068px;top:1272px;" width="38" height="34" viewBox="0 0 38 34" fill="none"><path d="M9 4v23M3 21L9 27l6-6" stroke="#6C707E" stroke-width="2" stroke-linecap="round" stroke-linejoin="round"/><circle cx="23" cy="9" r="3.200" stroke="#6C707E" stroke-width="2" stroke-linecap="round" stroke-linejoin="round"/><circle cx="23" cy="21" r="3.200" stroke="#6C707E" stroke-width="2" stroke-linecap="round" stroke-linejoin="round"/><path d="M23 3v3M23 12v6M23 24v3" stroke="#6C707E" stroke-width="2" stroke-linecap="round" stroke-linejoin="round"/><path d="M26.300 33.600h7.600v-7.600z" fill="#6C707E"/></svg>
<div style="left:2204px;top:1272px;width:32px;height:32px;border-radius:50%;background:#DFE0E5;"></div>
<svg style="left:2204px;top:1272px;" width="32" height="32" viewBox="0 0 32 32" fill="none"><path d="M11.300 9V23.200L24.200 16.100Z" stroke="#6C707E" stroke-width="2.200" stroke-linejoin="round"/></svg>
<svg style="left:2256px;top:1272px;" width="32" height="32" viewBox="0 0 32 32" fill="none"><path d="M22.500 6.300A11.800 11.800 0 0 0 4.400 19.200M0.600 14.700L4.400 19.200 8.300 14.700M9.600 25A11.800 11.800 0 0 0 28.300 12.800M25 17.300L28.300 12.800 31.500 17.300" stroke="#6C707E" stroke-width="2" stroke-linecap="round" stroke-linejoin="round"/></svg>
<svg style="left:2308px;top:1272px;" width="32" height="32" viewBox="0 0 32 32" fill="none"><circle cx="9.500" cy="23" r="5.500" stroke="#B7B7BA" stroke-width="2" stroke-linecap="round" stroke-linejoin="round"/><circle cx="22.500" cy="23" r="5.500" stroke="#B7B7BA" stroke-width="2" stroke-linecap="round" stroke-linejoin="round"/><path d="M9.500 17.500C11 11 15 6 20 3.500M22.500 17.500C21.500 11 20.500 7 20 3.500" stroke="#B7B7BA" stroke-width="2" stroke-linecap="round" stroke-linejoin="round"/></svg>
<svg style="left:2359px;top:1272px;" width="36" height="36" viewBox="0 0 36 36" fill="none"><path d="M1.200 15.700c3.200-6 8.500-9.700 14.800-9.700s11.600 3.700 14.800 9.700c-3.200 6-8.500 9.700-14.800 9.700S4.400 21.700 1.200 15.700z" stroke="#6C707E" stroke-width="2" stroke-linecap="round" stroke-linejoin="round"/><circle cx="16" cy="15.700" r="4.800" stroke="#6C707E" stroke-width="2" stroke-linecap="round" stroke-linejoin="round"/><path d="M26.300 33.700h7.700v-7.700z" fill="#6C707E"/></svg>
<svg style="left:2412px;top:1272px;" width="32" height="32" viewBox="0 0 32 32" fill="none"><circle cx="14.300" cy="15" r="9.500" stroke="#6C707E" stroke-width="2" stroke-linecap="round" stroke-linejoin="round"/><path d="M21.200 22l6 5.500" stroke="#6C707E" stroke-width="2" stroke-linecap="round" stroke-linejoin="round"/></svg>
<svg style="left:2494px;top:1272px;" width="32" height="32" viewBox="0 0 32 32" fill="none"><path d="M30 9H15M21 3l-6 6 6 6M2 23h15M11 17l6 6-6 6" stroke="#B7B7BA" stroke-width="2" stroke-linecap="round" stroke-linejoin="round"/></svg>
<svg style="left:2547px;top:1272px;" width="32" height="32" viewBox="0 0 32 32" fill="none"><path d="M9.700 2.500L2.200 10.200 9.700 17.600M2.800 10.200H20a7.750 7.750 0 0 1 0 15.500H8.500" stroke="#B7B7BA" stroke-width="2" stroke-linecap="round" stroke-linejoin="round"/></svg>
<svg style="left:2597px;top:1272px;" width="36" height="36" viewBox="0 0 36 36" fill="none"><path d="M1.200 15.700c3.200-6 8.500-9.700 14.800-9.700s11.600 3.700 14.800 9.700c-3.200 6-8.500 9.700-14.800 9.700S4.400 21.700 1.200 15.700z" stroke="#6C707E" stroke-width="2" stroke-linecap="round" stroke-linejoin="round"/><circle cx="16" cy="15.700" r="4.800" stroke="#6C707E" stroke-width="2" stroke-linecap="round" stroke-linejoin="round"/><path d="M26.300 33.700h7.700v-7.700z" fill="#6C707E"/></svg>
<svg style="left:2946px;top:1272px;" width="32" height="32" viewBox="0 0 32 32" fill="none"><path d="M8.500 11.200L16 3.500 23.500 11.200M8.500 20.800L16 28.500 23.500 20.800" stroke="#B7B7BA" stroke-width="2" stroke-linecap="round" stroke-linejoin="round"/></svg>
<svg style="left:2998px;top:1272px;" width="32" height="32" viewBox="0 0 32 32" fill="none"><path d="M8.500 4.200L16 11.900 23.500 4.200M8.500 27.200L16 19.500 23.500 27.200" stroke="#B7B7BA" stroke-width="2" stroke-linecap="round" stroke-linejoin="round"/></svg>
<span style="left:2569.4px;top:1405.6px;font-size:26.5px;line-height:26.5px;color:#818594;letter-spacing:0.71px;">Select commit to view changes</span>
<div style="left:2470px;top:1588px;width:584px;height:2px;background:#EBECF0;"></div>
<span style="left:2669.9px;top:1631.1px;font-size:26.5px;line-height:26.5px;color:#818594;letter-spacing:0.64px;">Commit details</span>
<div style="left:1138px;top:1352px;width:3px;height:52px;background:#B5814F;"></div>
<div style="left:1138px;top:1404px;width:3px;height:52px;background:#7148B5;"></div>
<div style="left:1138px;top:1456px;width:3px;height:52px;background:#7148B5;"></div>
<div style="left:1138px;top:1508px;width:3px;height:52px;background:#B3AE4E;"></div>
<div style="left:1138px;top:1560px;width:3px;height:52px;background:#B3AE4E;"></div>
<div style="left:1138px;top:1612px;width:3px;height:52px;background:#7148B5;"></div>
<div style="left:1138px;top:1664px;width:3px;height:52px;background:#B3AE4E;"></div>
<div style="left:1138px;top:1716px;width:3px;height:19px;background:#B5714B;"></div>
<div style="left:1131px;top:1343.5px;width:17px;height:17px;border-radius:50%;background:#B5814F;"></div>
<div style="left:1192.4px;top:1339.1px;width:415.6px;height:34.5px;overflow:hidden;"><span style="left:0;top:0;font-size:26.5px;line-height:26.5px;color:#000;letter-spacing:0.61px;">Add more tests and Pylint run to bu</span></div>
<svg style="left:1616.5px;top:1337px;" width="30" height="30" viewBox="0 0 30 30" fill="none"><path d="M3.300 16.600L15.200 4.100 22.800 5.900 23.800 12.700 13 24.600Z" stroke="#8258F0" stroke-width="2" stroke-linejoin="round"/><circle cx="18.700" cy="9.500" r="1.700" fill="#8258F0"/></svg>
<span style="left:1648.5px;top:1340.8px;font-size:24px;line-height:24px;color:#6A6E7C;letter-spacing:0.96px;">../31-software-requir...</span>
<span style="left:1918.4px;top:1339.1px;font-size:26.5px;line-height:26.5px;color:#000;letter-spacing:0.50px;">Aleksandra Nenadic</span>
<span style="left:2201.4px;top:1339.1px;font-size:26.5px;line-height:26.5px;color:#000;letter-spacing:0.68px;">14/07/2025, 16:50</span>
<div style="left:1131px;top:1395.5px;width:17px;height:17px;border-radius:50%;background:#7148B5;"></div>
<div style="left:1192.4px;top:1391.1px;width:409.6px;height:34.5px;overflow:hidden;"><span style="left:0;top:0;font-size:26.5px;line-height:26.5px;color:#000;letter-spacing:0.50px;">Add GA build matrix for os and Pyt</span></div>
<svg style="left:1609.5px;top:1389px;" width="30" height="30" viewBox="0 0 30 30" fill="none"><path d="M3.300 16.600L15.200 4.100 22.800 5.900 23.800 12.700 13 24.600Z" stroke="#8258F0" stroke-width="2" stroke-linejoin="round"/><circle cx="18.700" cy="9.500" r="1.700" fill="#8258F0"/></svg>
<span style="left:1642.0px;top:1392.8px;font-size:24px;line-height:24px;color:#6A6E7C;letter-spacing:0.89px;">../24-diagnosing-issu...</span>
<span style="left:1918.4px;top:1391.1px;font-size:26.5px;line-height:26.5px;color:#000;letter-spacing:0.50px;">Aleksandra Nenadic</span>
<span style="left:2201.4px;top:1391.1px;font-size:26.5px;line-height:26.5px;color:#000;letter-spacing:0.68px;">14/07/2025, 15:29</span>
<div style="left:1131px;top:1447.5px;width:17px;height:17px;border-radius:50%;background:#7148B5;"></div>
<span style="left:1192.4px;top:1443.1px;font-size:26.5px;line-height:26.5px;color:#000;letter-spacing:0.76px;">Add GitHub Actions configuration</span>
<span style="left:1918.4px;top:1443.1px;font-size:26.5px;line-height:26.5px;color:#000;letter-spacing:0.50px;">Aleksandra Nenadic</span>
<span style="left:2201.4px;top:1443.1px;font-size:26.5px;line-height:26.5px;color:#000;letter-spacing:0.68px;">14/07/2025, 15:28</span>
<div style="left:1131px;top:1499.5px;width:17px;height:17px;border-radius:50%;background:#B3AE4E;"></div>
<span style="left:1192.4px;top:1495.1px;font-size:26.5px;line-height:26.5px;color:#000;letter-spacing:0.83px;">Add coverage support</span>
<svg style="left:1611.5px;top:1493px;" width="30" height="30" viewBox="0 0 30 30" fill="none"><path d="M3.300 16.600L15.200 4.100 22.800 5.900 23.800 12.700 13 24.600Z" stroke="#8258F0" stroke-width="2" stroke-linejoin="round"/><circle cx="18.700" cy="9.500" r="1.700" fill="#8258F0"/></svg>
<span style="left:1644.0px;top:1496.8px;font-size:24px;line-height:24px;color:#6A6E7C;letter-spacing:0.98px;">../23-continuous-inte...</span>
<span style="left:1918.4px;top:1495.1px;font-size:26.5px;line-height:26.5px;color:#000;letter-spacing:0.50px;">Aleksandra Nenadic</span>
<span style="left:2201.4px;top:1495.1px;font-size:26.5px;line-height:26.5px;color:#000;letter-spacing:0.68px;">14/07/2025, 15:26</span>
<div style="left:1131px;top:1551.5px;width:17px;height:17px;border-radius:50%;background:#B3AE4E;"></div>
<span style="left:1192.4px;top:1547.1px;font-size:26.5px;line-height:26.5px;color:#000;letter-spacing:0.55px;">Add parameterisation mean, min, max test cases</span>
<span style="left:1918.4px;top:1547.1px;font-size:26.5px;line-height:26.5px;color:#000;letter-spacing:0.50px;">Aleksandra Nenadic</span>
<span style="left:2201.4px;top:1547.1px;font-size:26.5px;line-height:26.5px;color:#000;letter-spacing:0.68px;">14/07/2025, 15:25</span>
<div style="left:1131px;top:1603.5px;width:17px;height:17px;border-radius:50%;background:#7148B5;"></div>
<div style="left:1192.4px;top:1599.1px;width:417.6px;height:34.5px;overflow:hidden;"><span style="left:0;top:0;font-size:26.5px;line-height:26.5px;color:#000;letter-spacing:0.30px;">Add initial test cases for daily_max </span></div>
<svg style="left:1618.0px;top:1597px;" width="30" height="30" viewBox="0 0 30 30" fill="none"><path d="M3.300 16.600L15.200 4.100 22.800 5.900 23.800 12.700 13 24.600Z" stroke="#8258F0" stroke-width="2" stroke-linejoin="round"/><circle cx="18.700" cy="9.500" r="1.700" fill="#8258F0"/></svg>
<span style="left:1650.5px;top:1600.8px;font-size:24px;line-height:24px;color:#6A6E7C;letter-spacing:0.98px;">../22-scaling-up-unit...</span>
<span style="left:1918.4px;top:1599.1px;font-size:26.5px;line-height:26.5px;color:#000;letter-spacing:0.50px;">Aleksandra Nenadic</span>
<span style="left:2201.4px;top:1599.1px;font-size:26.5px;line-height:26.5px;color:#000;letter-spacing:0.68px;">14/07/2025, 15:22</span>
<div style="left:1131px;top:1655.5px;width:17px;height:17px;border-radius:50%;background:#B3AE4E;"></div>
<div style="left:1192.4px;top:1651.1px;width:423.6px;height:34.5px;overflow:hidden;"><span style="left:0;top:0;font-size:26.5px;line-height:26.5px;color:#000;letter-spacing:0.69px;">Add pylint and improved code style</span></div>
<svg style="left:1624.0px;top:1649px;" width="30" height="30" viewBox="0 0 30 30" fill="none"><path d="M3.300 16.600L15.200 4.100 22.800 5.900 23.800 12.700 13 24.600Z" stroke="#8258F0" stroke-width="2" stroke-linejoin="round"/><circle cx="18.700" cy="9.500" r="1.700" fill="#8258F0"/></svg>
<span style="left:1656.7px;top:1652.8px;font-size:24px;line-height:24px;color:#6A6E7C;letter-spacing:0.78px;">../21-automatically-t...</span>
<span style="left:1918.4px;top:1651.1px;font-size:26.5px;line-height:26.5px;color:#000;letter-spacing:0.50px;">Aleksandra Nenadic</span>
<span style="left:2201.4px;top:1651.1px;font-size:26.5px;line-height:26.5px;color:#000;letter-spacing:0.40px;">14/07/2025, 15:18</span>
<div style="left:1131px;top:1707.5px;width:17px;height:17px;border-radius:50%;background:#B5714B;"></div>
<span style="left:1192.4px;top:1703.1px;font-size:26.5px;line-height:26.5px;color:#000;letter-spacing:0.75px;">Docstring improvements.</span>
<svg style="left:1615.5px;top:1701px;" width="30" height="30" viewBox="0 0 30 30" fill="none"><path d="M3.300 16.600L15.200 4.100 22.800 5.900 23.800 12.700 13 24.600Z" stroke="#8258F0" stroke-width="2" stroke-linejoin="round"/><circle cx="18.700" cy="9.500" r="1.700" fill="#8258F0"/></svg>
<span style="left:1648.0px;top:1704.8px;font-size:24px;line-height:24px;color:#6A6E7C;letter-spacing:1.04px;">../16-verifying-code-...</span>
<span style="left:1918.4px;top:1703.1px;font-size:26.5px;line-height:26.5px;color:#000;letter-spacing:0.50px;">Aleksandra Nenadic</span>
<span style="left:2201.4px;top:1703.1px;font-size:26.5px;line-height:26.5px;color:#000;letter-spacing:0.68px;">14/07/2025, 15:08</span>
<div style="left:112px;top:1734px;width:3024px;height:2px;background:#EBECF0;"></div>
<div style="left:140px;top:1756px;width:16px;height:16px;border-radius:4px;border:2px solid #4F7FEA;background:#E4ECFD;"></div>
<span style="left:163.9px;top:1749.6px;font-size:26.5px;line-height:26.5px;color:#6C707E;letter-spacing:0.93px;">python-intermediate-inflammation</span>
<svg style="left:602px;top:1750px;" width="18" height="24" viewBox="0 0 18 24" fill="none"><path d="M5 4l8 8-8 8" stroke="#818594" stroke-width="2"/></svg>
<svg style="left:638px;top:1748px;" width="28" height="28.4" viewBox="0 0 28 28" fill="none"><path d="M11 0H17a3 3 0 0 1 3 3V10.500a4 4 0 0 1-4 4H10.500a4 4 0 0 0-4 4V20H3a3 3 0 0 1-3-3V11a3 3 0 0 1 3-3H14.200V6.100H8V3a3 3 0 0 1 3-3z" fill="#5585F2"/><rect x="9.900" y="2.200" width="2.300" height="2.300" rx=".6" fill="#F7F8FA"/><g transform="rotate(180 14 14)"><path d="M11 0H17a3 3 0 0 1 3 3V10.500a4 4 0 0 1-4 4H10.500a4 4 0 0 0-4 4V20H3a3 3 0 0 1-3-3V11a3 3 0 0 1 3-3H14.200V6.100H8V3a3 3 0 0 1 3-3z" fill="#F0AE3E"/><rect x="9.900" y="2.200" width="2.300" height="2.300" rx=".6" fill="#F7F8FA"/></g></svg>
<span style="left:675.4px;top:1749.6px;font-size:26.5px;line-height:26.5px;color:#6C707E;letter-spacing:0.72px;">inflammation-analysis.py</span>
<span style="left:1963.4px;top:1749.6px;font-size:26.5px;line-height:26.5px;color:#6C707E;letter-spacing:-1.30px;">1:1</span>
<span style="left:2027.9px;top:1749.6px;font-size:26.5px;line-height:26.5px;color:#6C707E;letter-spacing:-0.82px;">LF</span>
<span style="left:2089.9px;top:1749.6px;font-size:26.5px;line-height:26.5px;color:#6C707E;letter-spacing:1.14px;">UTF-8</span>
<svg style="left:2206px;top:1748px;" width="30" height="32" viewBox="0 0 30 32" fill="none"><path d="M8 27.500H5.500c-1.100 0-2-.9-2-2V9l6.500-6.500h10c1.100 0 2 .9 2 2V14M10 2.500V9H3.500" stroke="#6C707E" stroke-width="2" stroke-linejoin="round"/><path d="M24.1 23.0L24.1 23.2L24.1 23.4L24.1 23.7L24.2 23.9L24.3 24.2L24.6 24.5L24.8 24.8L24.9 25.2L24.9 25.5L24.9 25.7L24.8 26.0L24.6 26.2L24.5 26.5L24.3 26.7L24.1 26.9L23.8 27.1L23.5 27.1L23.1 27.1L22.7 27.0L22.4 27.0L22.1 27.1L21.9 27.2L21.7 27.3L21.5 27.4L21.3 27.5L21.2 27.6L21.0 27.7L20.8 27.9L20.6 28.2L20.5 28.6L20.3 29.0L20.1 29.2L19.8 29.4L19.6 29.5L19.3 29.5L19.0 29.5L18.7 29.5L18.4 29.5L18.2 29.4L17.9 29.2L17.7 29.0L17.5 28.6L17.4 28.2L17.2 27.9L17.0 27.7L16.8 27.6L16.7 27.5L16.5 27.4L16.3 27.3L16.1 27.2L15.9 27.1L15.6 27.0L15.3 27.0L14.9 27.1L14.5 27.1L14.2 27.1L13.9 26.9L13.7 26.7L13.5 26.5L13.4 26.3L13.2 26.0L13.1 25.7L13.1 25.5L13.1 25.2L13.2 24.8L13.4 24.5L13.7 24.2L13.8 23.9L13.9 23.7L13.9 23.4L13.9 23.2L13.9 23.0L13.9 22.8L13.9 22.6L13.9 22.3L13.8 22.1L13.7 21.8L13.4 21.5L13.2 21.2L13.1 20.8L13.1 20.5L13.1 20.3L13.2 20.0L13.4 19.8L13.5 19.5L13.7 19.3L13.9 19.1L14.2 18.9L14.5 18.9L14.9 18.9L15.3 19.0L15.6 19.0L15.9 18.9L16.1 18.8L16.3 18.7L16.5 18.6L16.7 18.5L16.8 18.4L17.0 18.3L17.2 18.1L17.4 17.8L17.5 17.4L17.7 17.0L17.9 16.8L18.2 16.6L18.4 16.5L18.7 16.5L19.0 16.5L19.3 16.5L19.6 16.5L19.8 16.6L20.1 16.8L20.3 17.0L20.5 17.4L20.6 17.8L20.8 18.1L21.0 18.3L21.2 18.4L21.3 18.5L21.5 18.6L21.7 18.7L21.9 18.8L22.1 18.9L22.4 19.0L22.7 19.0L23.1 18.9L23.5 18.9L23.8 18.9L24.1 19.1L24.3 19.3L24.5 19.5L24.6 19.8L24.8 20.0L24.9 20.3L24.9 20.5L24.9 20.8L24.8 21.2L24.6 21.5L24.3 21.8L24.2 22.1L24.1 22.3L24.1 22.6L24.1 22.8Z" stroke="#6C707E" stroke-width="1.6" stroke-linejoin="round"/><circle cx="19" cy="23" r="2" stroke="#6C707E" stroke-width="1.6"/></svg>
<span style="left:2241.9px;top:1749.6px;font-size:26.5px;line-height:26.5px;color:#6C707E;letter-spacing:0.72px;">4 spaces</span>
<span style="left:2385.9px;top:1749.6px;font-size:26.5px;line-height:26.5px;color:#6C707E;letter-spacing:0.59px;">Python 3.11 virtualenv a...mediate-inflammation/venv</span>
<svg style="left:3072px;top:1748px;" width="32" height="32" viewBox="0 0 32 32" fill="none"><rect x="3.500" y="12.500" width="18" height="13.500" rx="3" stroke="#6C707E" stroke-width="2" stroke-linecap="round" stroke-linejoin="round"/><path d="M12.500 17.500v4" stroke="#6C707E" stroke-width="2" stroke-linecap="round" stroke-linejoin="round"/><path d="M17 12.500V9c0-3 2-5 5-5s5 2 5 5v1" stroke="#6C707E" stroke-width="2" stroke-linecap="round" stroke-linejoin="round"/></svg>
<div style="left:116px;top:159px;width:887px;height:1009px;border:6px solid #A82D1B;border-radius:30px;"></div>
<div style="left:116px;top:1172px;width:2946px;height:574px;border:6px solid #A82D1B;border-radius:28px;"></div>
<div style="left:114px;top:232px;width:80px;height:89px;border:7px solid #A82D1B;border-radius:30px;"></div>
<div style="left:114px;top:1653px;width:77px;height:82px;border:7px solid #A82D1B;border-radius:28px;"></div>
</div></div>
</body></html>
